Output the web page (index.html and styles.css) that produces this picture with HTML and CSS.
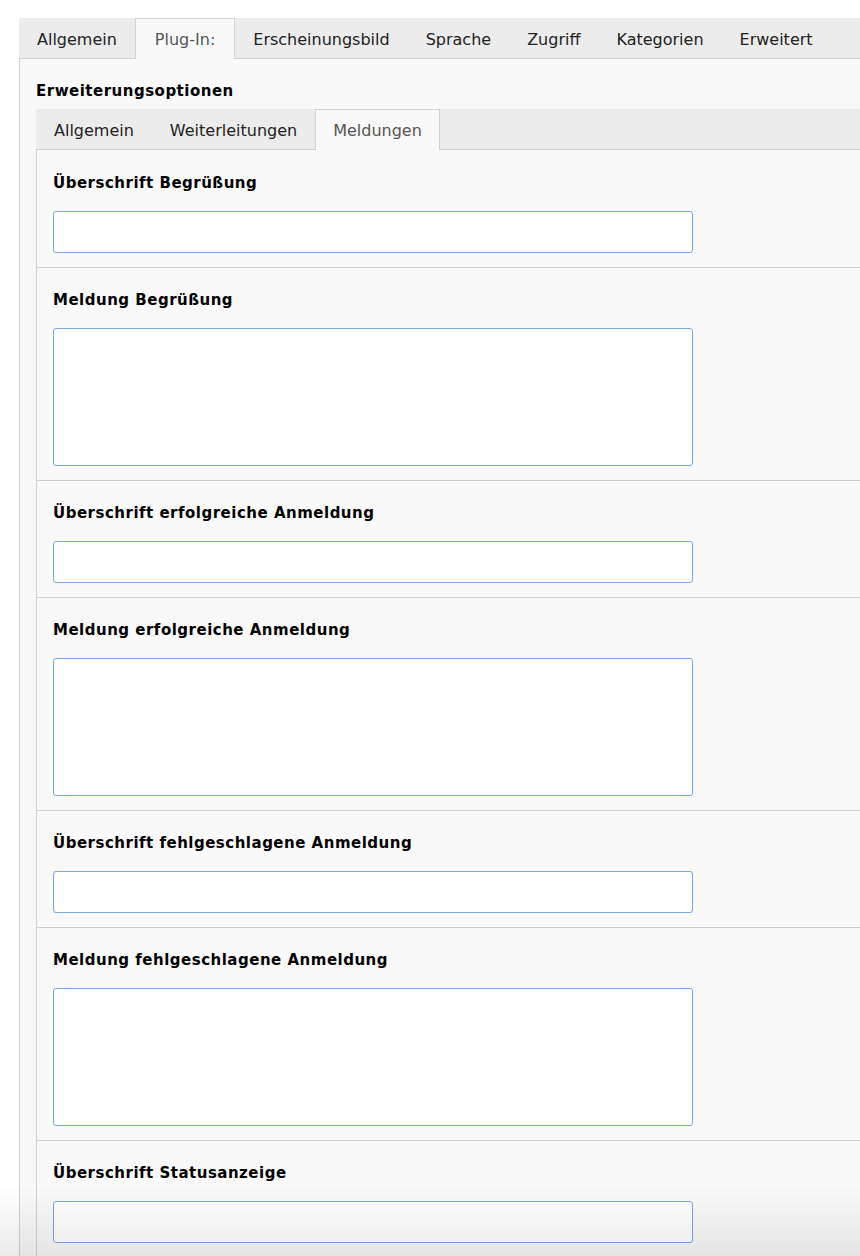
FILE: index.html
```html
<!DOCTYPE html>
<html lang="de">

<head>
    <meta charset="UTF-8">
    <meta name="viewport" content="width=device-width, initial-scale=1.0">
    <title>Plug-In Optionen</title>
    <link rel="stylesheet" href="styles.css">
</head>

<body>
    <div class="editor">
        <ul class="tabs tabs-main">
            <li class="tab">Allgemein</li>
            <li class="tab active">Plug-In:</li>
            <li class="tab">Erscheinungsbild</li>
            <li class="tab">Sprache</li>
            <li class="tab">Zugriff</li>
            <li class="tab">Kategorien</li>
            <li class="tab">Erweitert</li>
        </ul>
        <div class="panel">
            <h3 class="section-title">Erweiterungsoptionen</h3>
            <ul class="tabs">
                <li class="tab">Allgemein</li>
                <li class="tab">Weiterleitungen</li>
                <li class="tab active">Meldungen</li>
            </ul>
            <div class="sub-panel">
                <div class="field">
                    <label class="field-label">Überschrift Begrüßung</label>
                    <input class="field-input" type="text">
                </div>
                <div class="field">
                    <label class="field-label">Meldung Begrüßung</label>
                    <textarea class="field-input field-area"></textarea>
                </div>
                <div class="field">
                    <label class="field-label">Überschrift erfolgreiche Anmeldung</label>
                    <input class="field-input" type="text">
                </div>
                <div class="field">
                    <label class="field-label">Meldung erfolgreiche Anmeldung</label>
                    <textarea class="field-input field-area"></textarea>
                </div>
                <div class="field">
                    <label class="field-label">Überschrift fehlgeschlagene Anmeldung</label>
                    <input class="field-input" type="text">
                </div>
                <div class="field">
                    <label class="field-label">Meldung fehlgeschlagene Anmeldung</label>
                    <textarea class="field-input field-area"></textarea>
                </div>
                <div class="field">
                    <label class="field-label">Überschrift Statusanzeige</label>
                    <input class="field-input" type="text">
                </div>
            </div>
        </div>
    </div>
    <div class="fade"></div>
</body>

</html>
```

FILE: styles.css
```css
body {
    margin: 0;
    background: #fff;
    font-family: "DejaVu Sans", Verdana, sans-serif;
    font-size: 16px;
    color: #222;
    overflow: hidden;
}

.editor {
    margin: 18px 0 0 19px;
}

.tabs {
    list-style: none;
    margin: 0;
    padding: 0;
    display: flex;
    height: 40px;
    background: #ececec;
    border-bottom: 1px solid #cfcfcf;
}

.tab {
    display: flex;
    align-items: center;
    padding: 0 17px;
    border: 1px solid transparent;
    border-bottom: none;
    margin-bottom: -1px;
    color: #222;
}

.tab.active {
    background: #f9f9f9;
    border-color: #d2d2d2;
    color: #555;
}

.tabs-main .tab.active {
    padding: 0 19px;
}

.panel {
    background: #f9f9f9;
    border-left: 1px solid #d0d0d0;
    padding: 22px 0 0 16px;
    min-height: 1300px;
}

.section-title {
    margin: 0 0 8px;
    font-size: 15px;
    line-height: 20px;
    font-weight: bold;
    letter-spacing: 0.5px;
    color: #000;
}

.sub-panel {
    border-left: 1px solid #d0d0d0;
    padding-top: 1px;
}

.field {
    display: flex;
    flex-direction: column;
    align-items: flex-start;
    padding: 22px 16px 14px;
    border-bottom: 1px solid #cfcfcf;
}

.field-label {
    font-size: 15px;
    line-height: 20px;
    font-weight: bold;
    letter-spacing: 0.5px;
    color: #000;
    margin-bottom: 18px;
}

.field-input {
    box-sizing: border-box;
    width: 640px;
    height: 42px;
    margin: 0;
    border: 1px solid #7aa7e0;
    border-radius: 3px;
    background: #fff;
    font-family: inherit;
    font-size: 14px;
    padding: 4px 8px;
}

.field-area {
    height: 138px;
    resize: none;
    display: block;
}

.fade {
    position: fixed;
    left: 0;
    right: 0;
    bottom: 0;
    height: 70px;
    pointer-events: none;
    background-image: linear-gradient(to bottom, rgba(0, 0, 0, 0) 0%, rgba(0, 0, 0, .08) 100%);
}
```
